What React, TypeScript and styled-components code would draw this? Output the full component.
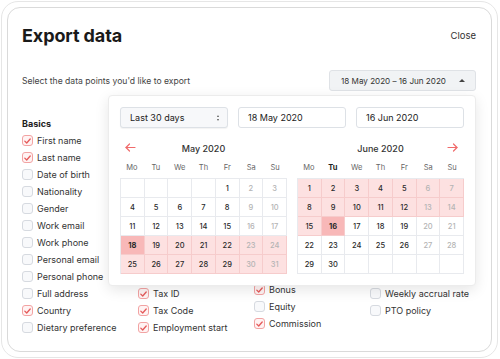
import React from 'react';
import styled, { createGlobalStyle } from 'styled-components';

const GlobalStyle = createGlobalStyle`
  html, body { margin: 0; background: #fff; }
  body {
    font-family: Inter, "Noto Sans", sans-serif;
    color: #222;
  }
  * { box-sizing: border-box; }
`;

const Frame = styled.div`
  width: 497px;
  height: 357px;
  margin: 1px 0 0 1px;
  border: 1px solid #e6e6e6;
  border-radius: 17px;
  padding: 5px;
`;

const Card = styled.div`
  position: relative;
  height: 100%;
  border: 1px solid #dadada;
  border-radius: 13px;
  padding: 16px 15px 0 14px;
`;

const Header = styled.div`
  display: flex;
  justify-content: space-between;
  align-items: center;
`;

const Title = styled.h1`
  margin: 0;
  font-size: 18px;
  line-height: 24px;
  font-weight: 700;
  letter-spacing: -0.1px;
  color: #1a1a1a;
`;

const CloseLink = styled.span`
  font-size: 9.5px;
  color: #333;
  margin-top: -2px;
`;

const Toolbar = styled.div`
  display: flex;
  justify-content: space-between;
  align-items: center;
  margin-top: 22px;
`;

const Hint = styled.span`
  font-size: 8.6px;
  color: #444;
`;

const Picker = styled.div`
  position: relative;
`;

const RangeButton = styled.div`
  display: flex;
  align-items: center;
  justify-content: space-between;
  width: 147px;
  height: 21px;
  padding: 0 10px 0 11px;
  background: #f1f3f5;
  border: 1px solid #dfe2e6;
  border-radius: 3px;
  font-size: 8.1px;
  color: #333;
`;

const Caret = styled.span`
  width: 0;
  height: 0;
  border-left: 3px solid transparent;
  border-right: 3px solid transparent;
  border-bottom: 3px solid #444;
`;

const Popover = styled.div`
  position: absolute;
  top: calc(100% + 4px);
  right: 0;
  z-index: 5;
  width: 368px;
  background: #fff;
  border: 1px solid #ececec;
  border-radius: 4px;
  box-shadow: 0 4px 14px rgba(0, 0, 0, 0.1);
  padding: 11px;
`;

const Controls = styled.div`
  display: grid;
  grid-template-columns: repeat(3, 108px);
  gap: 10px;
`;

const Field = styled.div<{ $select?: boolean }>`
  display: flex;
  align-items: center;
  justify-content: space-between;
  height: 21px;
  padding: 0 8px 0 9px;
  border: 1px solid #dde1e6;
  border-radius: 3px;
  background: ${p => (p.$select ? '#f7f8fa' : '#fff')};
  box-shadow: ${p => (p.$select ? '0 1px 1px rgba(0,0,0,0.05)' : 'none')};
  font-size: 9px;
  color: #222;
`;

const Spinner = styled.span`
  display: flex;
  flex-direction: column;
  gap: 2px;
  &::before, &::after {
    content: '';
    width: 0;
    height: 0;
    border-left: 1.5px solid transparent;
    border-right: 1.5px solid transparent;
  }
  &::before { border-bottom: 2px solid #555; }
  &::after { border-top: 2px solid #555; }
`;

const Months = styled.div`
  display: grid;
  grid-template-columns: repeat(2, 167px);
  gap: 10px;
  margin-top: 10px;
`;

const MonthHead = styled.div`
  position: relative;
  height: 20px;
  display: flex;
  align-items: center;
  justify-content: center;
  font-size: 9px;
  font-weight: 500;
  color: #333;
`;

const NavArrow = styled.svg<{ $side: 'left' | 'right' }>`
  position: absolute;
  top: 5px;
  ${p => (p.$side === 'left' ? 'left: 5px;' : 'right: 6px;')}
`;

const Weekdays = styled.div`
  display: grid;
  grid-template-columns: repeat(7, 1fr);
  height: 18px;
  align-items: center;
  margin-bottom: 2px;
`;

const Weekday = styled.span<{ $today?: boolean }>`
  text-align: center;
  font-size: 7.5px;
  color: ${p => (p.$today ? '#222' : '#666')};
  font-weight: ${p => (p.$today ? 700 : 400)};
`;

const Grid = styled.div`
  display: grid;
  grid-template-columns: repeat(7, 1fr);
  border-top: 1px solid #e8eaee;
  border-left: 1px solid #e8eaee;
`;

type Tone = 'none' | 'range' | 'edge';

const Cell = styled.div<{ $tone: Tone; $weekend: boolean }>`
  height: 19px;
  display: flex;
  align-items: center;
  justify-content: center;
  font-size: 7.5px;
  font-weight: ${p => (p.$tone === 'edge' ? 700 : 500)};
  color: ${p => (p.$weekend ? '#b4b4b4' : '#2a2a2a')};
  border-right: 1px solid ${p => (p.$tone === 'none' ? '#e8eaee' : '#f6cccc')};
  border-bottom: 1px solid ${p => (p.$tone === 'none' ? '#e8eaee' : '#f6cccc')};
  background: ${p => (p.$tone === 'edge' ? '#f8b8b8' : p.$tone === 'range' ? '#fde1e1' : '#fff')};
`;

const Columns = styled.div`
  display: grid;
  grid-template-columns: repeat(4, 116px);
  margin-top: 24px;
`;

const Section = styled.div<{ $gap?: number }>`
  margin-top: ${p => p.$gap ?? 0}px;
`;

const SectionTitle = styled.div`
  height: 17px;
  line-height: 17px;
  font-size: 9px;
  font-weight: 700;
  color: #222;
`;

const Item = styled.label`
  display: flex;
  align-items: center;
  gap: 4px;
  height: 17px;
  font-size: 9px;
  color: #333;
  white-space: nowrap;
`;

const Box = styled.span<{ $on?: boolean }>`
  flex: none;
  width: 11px;
  height: 11px;
  border-radius: 3px;
  display: flex;
  align-items: center;
  justify-content: center;
  border: 1px solid ${p => (p.$on ? '#f2a3a3' : '#d6dae0')};
  background: ${p => (p.$on ? '#fff3f3' : '#f8f9fb')};
`;

const Check = ({ on, label }: { on?: boolean; label: string }) => (
  <Item>
    <Box $on={on}>
      {on && (
        <svg width='7' height='6' viewBox='0 0 7 6'>
          <polyline points='0.8,3.1 2.7,5 6.2,1' fill='none' stroke='#e55a5a' strokeWidth='1.3' strokeLinecap='round' strokeLinejoin='round' />
        </svg>
      )}
    </Box>
    {label}
  </Item>
);

type Group = { title?: string; gap?: number; items: [string, boolean?][] };

const columns: Group[][] = [
  [
    {
      title: 'Basics',
      items: [
        ['First name', true], ['Last name', true], ['Date of birth'], ['Nationality'], ['Gender'],
        ['Work email'], ['Work phone'], ['Personal email'], ['Personal phone'], ['Full address'],
        ['Country', true], ['Dietary preference'],
      ],
    },
  ],
  [
    {
      title: 'Employment',
      items: [
        ['Job title', true], ['Department', true], ['Manager'], ['Location'], ['Contract type'],
        ['Start date', true], ['Probation end'], ['Employee ID'], ['Tax number'], ['Tax ID', true],
        ['Tax Code', true], ['Employment start', true],
      ],
    },
  ],
  [
    { title: 'Salary', items: [['Salary', true], ['Currency', true], ['Pay frequency'], ['Hourly rate']] },
    { title: 'Variable pay', gap: 13, items: [['Allowances'], ['Overtime'], ['Tips'], ['Bonus', true], ['Equity'], ['Commission', true]] },
  ],
  [
    {
      title: 'Time off',
      items: [
        ['Allowance'], ['Used days'], ['Remaining days'], ['Sick leave'], ['Carry over'],
        ['Public holidays'], ['Parental leave'], ['Unpaid leave'], ['Accrual start'],
        ['Weekly accrual rate'], ['PTO policy'],
      ],
    },
  ],
];

const weekdays = ['Mo', 'Tu', 'We', 'Th', 'Fr', 'Sa', 'Su'];

type Month = { name: string; offset: number; days: number; from: number; to: number; nav: 'left' | 'right'; today?: number };

const months: Month[] = [
  { name: 'May 2020', offset: 4, days: 31, from: 18, to: 31, nav: 'left' },
  { name: 'June 2020', offset: 0, days: 30, from: 1, to: 16, nav: 'right', today: 1 },
];

const edges = { 'May 2020': 18, 'June 2020': 16 } as Record<string, number>;

const Arrow = ({ side }: { side: 'left' | 'right' }) => (
  <NavArrow $side={side} width='11' height='9' viewBox='0 0 11 9'>
    <g fill='none' stroke='#f06b6b' strokeWidth='1.2' strokeLinecap='round' strokeLinejoin='round'
      transform={side === 'right' ? 'translate(11 0) scale(-1 1)' : undefined}>
      <line x1='1' y1='4.5' x2='10' y2='4.5' />
      <polyline points='4.5,1 1,4.5 4.5,8' />
    </g>
  </NavArrow>
);

const Calendar = ({ m }: { m: Month }) => {
  const cells: (number | null)[] = [];
  for (let i = 0; i < m.offset; i++) cells.push(null);
  for (let d = 1; d <= m.days; d++) cells.push(d);
  while (cells.length < 35) cells.push(null);

  return (
    <div>
      <MonthHead>
        <Arrow side={m.nav} />
        {m.name}
      </MonthHead>
      <Weekdays>
        {weekdays.map((w, i) => (
          <Weekday key={w} $today={m.today === i}>{w}</Weekday>
        ))}
      </Weekdays>
      <Grid>
        {cells.map((d, i) => {
          const tone: Tone = d == null ? 'none' : d === edges[m.name] ? 'edge' : d >= m.from && d <= m.to ? 'range' : 'none';
          return (
            <Cell key={i} $tone={tone} $weekend={i % 7 >= 5}>
              {d}
            </Cell>
          );
        })}
      </Grid>
    </div>
  );
};

export default function App() {
  return (
    <>
      <GlobalStyle />
      <Frame>
        <Card>
          <Header>
            <Title>Export data</Title>
            <CloseLink>Close</CloseLink>
          </Header>

          <Toolbar>
            <Hint>Select the data points you'd like to export</Hint>
            <Picker>
              <RangeButton>
                <span>18 May 2020 – 16 Jun 2020</span>
                <Caret />
              </RangeButton>
              <Popover>
                <Controls>
                  <Field $select>
                    <span>Last 30 days</span>
                    <Spinner />
                  </Field>
                  <Field>18 May 2020</Field>
                  <Field>16 Jun 2020</Field>
                </Controls>
                <Months>
                  {months.map(m => (
                    <Calendar key={m.name} m={m} />
                  ))}
                </Months>
              </Popover>
            </Picker>
          </Toolbar>

          <Columns>
            {columns.map((groups, ci) => (
              <div key={ci}>
                {groups.map(g => (
                  <Section key={g.title} $gap={g.gap}>
                    <SectionTitle>{g.title}</SectionTitle>
                    {g.items.map(([label, on]) => (
                      <Check key={label} label={label} on={on} />
                    ))}
                  </Section>
                ))}
              </div>
            ))}
          </Columns>
        </Card>
      </Frame>
    </>
  );
}
